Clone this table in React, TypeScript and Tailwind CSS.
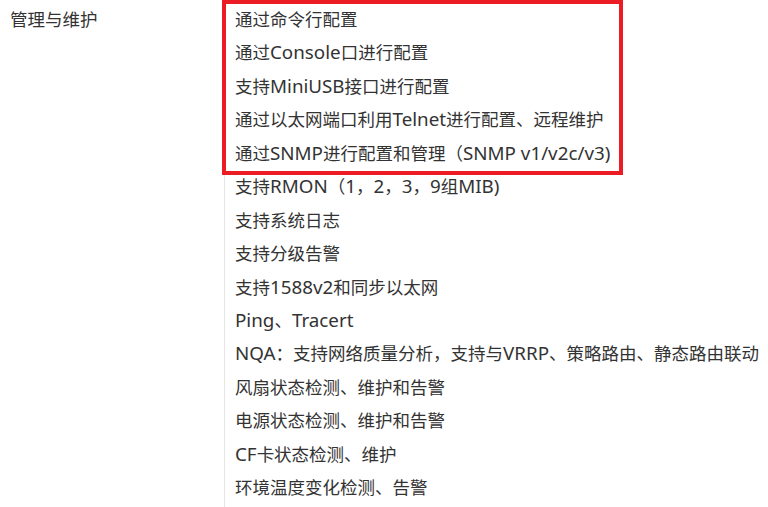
const ITEMS = [
  '通过命令行配置',
  '通过Console口进行配置',
  '支持MiniUSB接口进行配置',
  '通过以太网端口利用Telnet进行配置、远程维护',
  '通过SNMP进行配置和管理（SNMP v1/v2c/v3)',
  '支持RMON（1，2，3，9组MIB)',
  '支持系统日志',
  '支持分级告警',
  '支持1588v2和同步以太网',
  'Ping、Tracert',
  'NQA：支持网络质量分析，支持与VRRP、策略路由、静态路由联动',
  '风扇状态检测、维护和告警',
  '电源状态检测、维护和告警',
  'CF卡状态检测、维护',
  '环境温度变化检测、告警'
]

// latin runs sit a touch larger next to the CJK glyphs
const Line = ({ text }: { text: string }) => (
  <>
    {text.split(/([A-Za-z0-9/(). ]+)/).map((part, i) =>
      i % 2 === 1 ? (
        <span key={i} className="text-[18.8px]">
          {part}
        </span>
      ) : (
        part
      )
    )}
  </>
)

export default function App() {
  return (
    <div
      className="flex h-[507px] w-[768px] overflow-hidden bg-white text-[17.5px] text-[#333]"
      style={{ fontFamily: '"Noto Sans", "Noto Sans CJK SC", sans-serif' }}
    >
      <div className="w-[224px] shrink-0 pl-[10px] pt-[3px] leading-[33.43px]">
        管理与维护
      </div>
      <div className="relative flex-1 border-l border-[#e6e6e6] pl-[10px] pt-[3px]">
        <ul className="leading-[33.43px] whitespace-nowrap">
          {ITEMS.map((item) => (
            <li key={item}>
              <Line text={item} />
            </li>
          ))}
        </ul>
        {/* annotation box drawn over the first five rows */}
        <div className="pointer-events-none absolute left-[-3px] top-0 h-[175px] w-[401px] border-4 border-[#ec1c24]" />
      </div>
    </div>
  )
}
